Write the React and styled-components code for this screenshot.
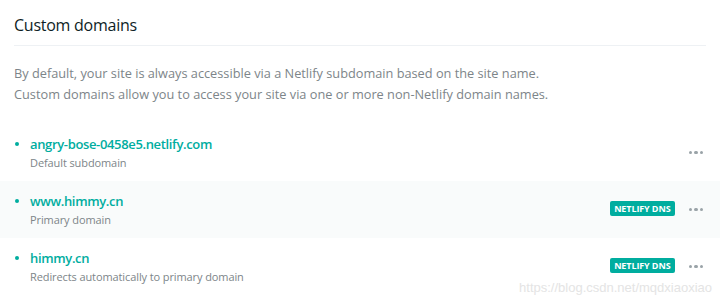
import styled, { createGlobalStyle } from "styled-components";

const GlobalStyle = createGlobalStyle`
  * { box-sizing: border-box; }
  body {
    margin: 0;
    background: #fff;
    font-family: "Open Sans", "Noto Sans", sans-serif;
  }
`;

const Page = styled.div`
  position: relative;
  width: 720px;
  height: 300px;
  overflow: hidden;
  background: #fff;
`;

const Header = styled.div`
  margin: 0 14px;
  padding: 14px 0 9px;
  border-bottom: 1px solid #eef1f4;
`;

const Title = styled.h2`
  margin: 0;
  font-size: 16px;
  font-weight: 400;
  letter-spacing: -0.25px;
  color: #0e1e25;
  line-height: 22px;
`;

const Description = styled.p`
  margin: 17px 14px 19px;
  font-size: 12.75px;
  line-height: 21px;
  color: #7d8589;
`;

const List = styled.ul`
  margin: 0;
  padding: 0;
  list-style: none;
`;

const Row = styled.li`
  display: flex;
  align-items: center;
  height: 57px;
  padding: 0 17px 0 14px;
  background: ${(p) => (p.$striped ? "#f9fbfb" : "#fff")};
`;

const Bullet = styled.span`
  width: 4px;
  height: 4px;
  border-radius: 50%;
  background: #00ad9f;
  margin: 0 11px 17px 1px;
`;

const Info = styled.div`
  flex: 1;
  display: flex;
  flex-direction: column;
`;

const Domain = styled.a`
  font-size: 13px;
  font-weight: 600;
  letter-spacing: -0.35px;
  color: #00ad9f;
  line-height: 19px;
  text-decoration: none;
`;

const Note = styled.span`
  font-size: 11px;
  letter-spacing: -0.1px;
  color: #7d8589;
  line-height: 17px;
`;

const Badge = styled.span`
  background: #00ad9f;
  color: #fff;
  font-size: 9px;
  font-weight: 700;
  letter-spacing: -0.1px;
  line-height: 15px;
  padding: 0 4px;
  border-radius: 2px;
  margin-right: 14px;
  margin-bottom: 2px;
`;

const More = styled.button`
  border: none;
  background: none;
  padding: 0;
  display: flex;
  gap: 2px;
  cursor: pointer;
`;

const Dot = styled.i`
  width: 3.5px;
  height: 3.5px;
  border-radius: 50%;
  background: #9aa3a8;
`;

const Watermark = styled.span`
  position: absolute;
  right: 8px;
  bottom: 5px;
  font-family: "Liberation Sans", Arial, sans-serif;
  font-size: 13px;
  color: #e4e4e4;
`;

const domains = [
  { name: "angry-bose-0458e5.netlify.com", note: "Default subdomain" },
  { name: "www.himmy.cn", note: "Primary domain", dns: true },
  { name: "himmy.cn", note: "Redirects automatically to primary domain", dns: true },
];

export default function App() {
  return (
    <Page>
      <GlobalStyle />
      <Header>
        <Title>Custom domains</Title>
      </Header>
      <Description>
        By default, your site is always accessible via a Netlify subdomain based on the site name.
        <br />
        Custom domains allow you to access your site via one or more non-Netlify domain names.
      </Description>
      <List>
        {domains.map((d, i) => (
          <Row key={d.name} $striped={i === 1}>
            <Bullet />
            <Info>
              <Domain href="#">{d.name}</Domain>
              <Note>{d.note}</Note>
            </Info>
            {d.dns && <Badge>NETLIFY DNS</Badge>}
            <More>
              <Dot />
              <Dot />
              <Dot />
            </More>
          </Row>
        ))}
      </List>
      <Watermark>https://blog.csdn.net/mqdxiaoxiao</Watermark>
    </Page>
  );
}
